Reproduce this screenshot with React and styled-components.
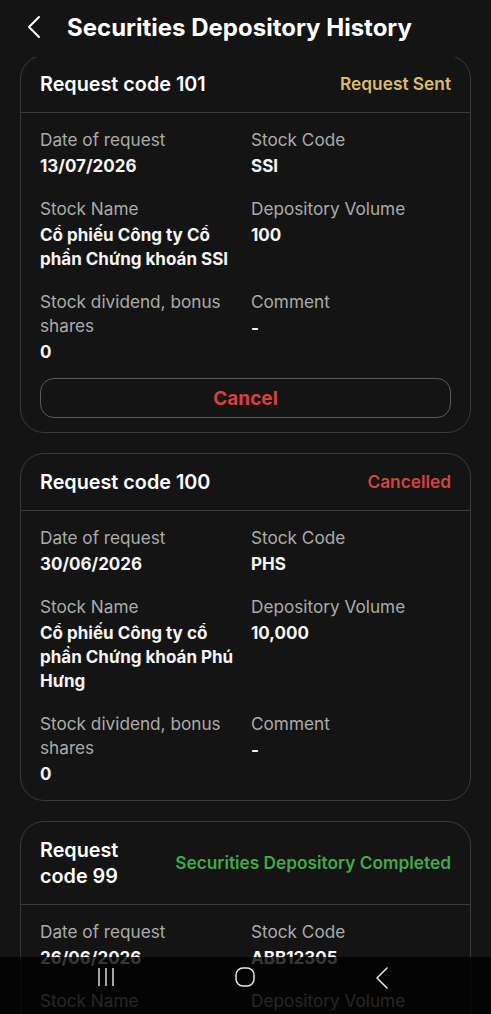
import styled, { createGlobalStyle } from "styled-components";

const GlobalStyle = createGlobalStyle`
  html, body {
    margin: 0;
    padding: 0;
    background: #141414;
  }
  body {
    font-family: Inter, "Noto Sans", "Liberation Sans", sans-serif;
    color: #ffffff;
    overflow: hidden;
  }
`;

const Page = styled.div`
  height: 100vh;
  display: flex;
  flex-direction: column;
  overflow: hidden;
  background: #141414;
`;

const Header = styled.div`
  position: relative;
  z-index: 2;
  flex: 0 0 57px;
  height: 57px;
  box-sizing: border-box;
  padding: 0 0 3px 26px;
  display: flex;
  align-items: center;
  gap: 25px;
  background: #141414;
`;

const BackButton = styled.button`
  display: flex;
  align-items: center;
  background: none;
  border: none;
  padding: 0;
  color: #fff;
  cursor: pointer;
`;

const Title = styled.h1`
  margin: 0;
  font-size: 24px;
  font-weight: 700;
`;

const List = styled.div`
  display: flex;
  flex-direction: column;
  gap: 20px;
  padding: 0 20px;
  margin-top: -2px;
`;

const Card = styled.div`
  border: 1px solid #3a3a3a;
  border-radius: 24px;
  flex-shrink: 0;
`;

const CardHead = styled.div`
  display: flex;
  justify-content: space-between;
  align-items: center;
  gap: 16px;
  padding: 15px 19px;
  border-bottom: 1px solid #3a3a3a;
`;

const Code = styled.div`
  font-size: 19.8px;
  font-weight: 600;
  line-height: 26px;
`;

const statusColors = {
  sent: "#dcbd68",
  cancelled: "#d8423c",
  done: "#43a948",
};

const Status = styled.div`
  font-size: 17.3px;
  font-weight: 600;
  line-height: 24px;
  white-space: nowrap;
  color: ${(p) => statusColors[p.$type]};
`;

const CardBody = styled.div`
  padding: 15px 19px 14px;
`;

const Grid = styled.div`
  display: grid;
  grid-template-columns: 200px 200px;
  column-gap: 11px;
  row-gap: 19px;
`;

const Field = styled.div`
  display: flex;
  flex-direction: column;
`;

const Label = styled.div`
  font-size: 17.2px;
  line-height: 24px;
  color: #ababab;
`;

const Value = styled.div`
  margin-top: 2px;
  font-size: 17px;
  line-height: 24px;
  font-weight: 700;
  color: #f5f5f5;
`;

const CancelButton = styled.button`
  width: 100%;
  height: 40px;
  margin-top: 14px;
  background: transparent;
  border: 1px solid #5a5a5a;
  border-radius: 14px;
  color: #d8423c;
  font-family: inherit;
  font-size: 19px;
  font-weight: 700;
  cursor: pointer;
`;

const NavBar = styled.div`
  position: fixed;
  left: 0;
  right: 0;
  bottom: 0;
  height: 57px;
  z-index: 3;
  background: rgba(0, 0, 0, 0.78);
  display: grid;
  grid-template-columns: repeat(3, 1fr);
  align-items: start;
  padding-top: 10px;
  box-sizing: border-box;
`;

const NavItem = styled.div`
  display: flex;
  justify-content: center;
  transform: translateX(${(p) => p.$shift || 0}px);
`;

const requests = [
  {
    code: "Request code 101",
    status: "Request Sent",
    type: "sent",
    date: "13/07/2026",
    stock: "SSI",
    name: "Cổ phiếu Công ty Cổ phần Chứng khoán SSI",
    volume: "100",
    dividend: "0",
    comment: "-",
    cancel: true,
  },
  {
    code: "Request code 100",
    status: "Cancelled",
    type: "cancelled",
    date: "30/06/2026",
    stock: "PHS",
    name: "Cổ phiếu Công ty cổ phần Chứng khoán Phú Hưng",
    volume: "10,000",
    dividend: "0",
    comment: "-",
  },
  {
    code: "Request code 99",
    status: "Securities Depository Completed",
    type: "done",
    date: "26/06/2026",
    stock: "ABB12305",
    name: "Cổ phiếu Ngân hàng An Bình",
    volume: "5,000",
    dividend: "0",
    comment: "-",
  },
];

function RequestCard({ item }) {
  return (
    <Card>
      <CardHead>
        <Code>{item.code}</Code>
        <Status $type={item.type}>{item.status}</Status>
      </CardHead>
      <CardBody>
        <Grid>
          <Field>
            <Label>Date of request</Label>
            <Value>{item.date}</Value>
          </Field>
          <Field>
            <Label>Stock Code</Label>
            <Value>{item.stock}</Value>
          </Field>
          <Field>
            <Label>Stock Name</Label>
            <Value>{item.name}</Value>
          </Field>
          <Field>
            <Label>Depository Volume</Label>
            <Value>{item.volume}</Value>
          </Field>
          <Field>
            <Label>Stock dividend, bonus shares</Label>
            <Value>{item.dividend}</Value>
          </Field>
          <Field>
            <Label>Comment</Label>
            <Value>{item.comment}</Value>
          </Field>
        </Grid>
        {item.cancel && <CancelButton>Cancel</CancelButton>}
      </CardBody>
    </Card>
  );
}

export default function App() {
  return (
    <>
      <GlobalStyle />
      <Page>
        <Header>
          <BackButton>
            <svg width="16" height="24" viewBox="0 0 16 24" fill="none">
              <path
                d="M13 2 L3 12 L13 22"
                stroke="#fff"
                strokeWidth="2"
                strokeLinecap="round"
                strokeLinejoin="round"
              />
            </svg>
          </BackButton>
          <Title>Securities Depository History</Title>
        </Header>
        <List>
          {requests.map((r) => (
            <RequestCard key={r.code} item={r} />
          ))}
        </List>
      </Page>
      <NavBar>
        <NavItem $shift={24}>
          <svg width="20" height="20" viewBox="0 0 20 20" fill="none">
            <path
              d="M3 1 V19 M10 1 V19 M17 1 V19"
              stroke="#e8e8e8"
              strokeWidth="1.4"
            />
          </svg>
        </NavItem>
        <NavItem>
          <svg width="20" height="20" viewBox="0 0 20 20" fill="none">
            <rect
              x="1"
              y="1"
              width="18"
              height="18"
              rx="7"
              stroke="#e8e8e8"
              strokeWidth="1.5"
            />
          </svg>
        </NavItem>
        <NavItem $shift={-27}>
          <svg width="14" height="22" viewBox="0 0 14 22" fill="none">
            <path
              d="M12 1 L2 11 L12 21"
              stroke="#e8e8e8"
              strokeWidth="1.5"
              strokeLinecap="round"
              strokeLinejoin="round"
            />
          </svg>
        </NavItem>
      </NavBar>
    </>
  );
}
